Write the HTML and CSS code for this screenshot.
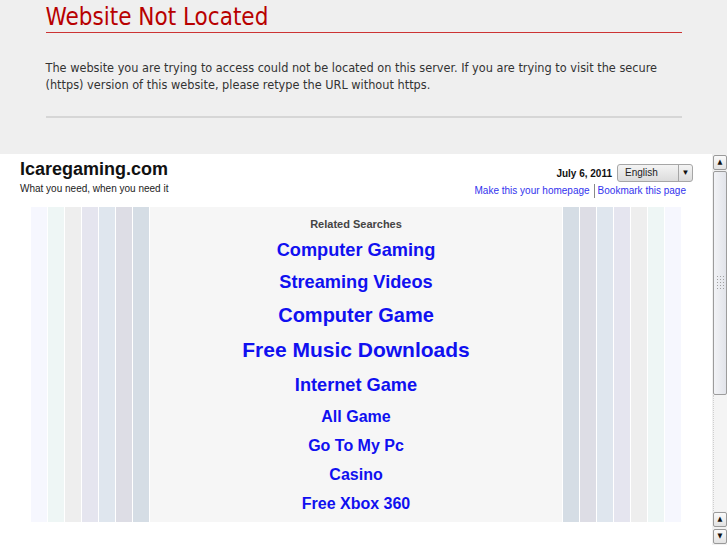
FILE: index.html
```html
<!DOCTYPE html>
<html lang="en">
<head>
    <meta charset="UTF-8">
    <title>Website Not Located</title>
    <link rel="stylesheet" href="styles.css">
</head>
<body>
    <div class="notice">
        <div class="notice-inner">
            <h1>Website Not Located</h1>
            <p>The website you are trying to access could not be located on this server. If you are trying to visit the secure (https) version of this website, please retype the URL without https.</p>
            <div class="rule"></div>
        </div>
    </div>

    <div class="frame">
        <div class="frame-page">
            <div class="top">
                <div class="brand">
                    <div class="brand-name">Icaregaming.com</div>
                    <div class="tagline">What you need, when you need it</div>
                </div>
                <div class="tools">
                    <div class="date-row">
                        <span class="date">July 6, 2011</span>
                        <div class="lang">
                            <span class="lang-label">English</span>
                            <span class="lang-arrow">&#9660;</span>
                        </div>
                    </div>
                    <div class="links">
                        <a href="#">Make this your homepage</a>
                        <a href="#" class="sep">Bookmark this page</a>
                    </div>
                </div>
            </div>

            <div class="results">
                <div class="stripes left">
                    <span class="c1"></span><span class="c2"></span><span class="c3"></span><span class="c4"></span><span class="c5"></span><span class="c6"></span><span class="c7"></span>
                </div>
                <div class="searches">
                    <div class="searches-title">Related Searches</div>
                    <a href="#" class="s18">Computer Gaming</a>
                    <a href="#" class="s18">Streaming Videos</a>
                    <a href="#" class="s20">Computer Game</a>
                    <a href="#" class="s21">Free Music Downloads</a>
                    <a href="#" class="s18 after-big">Internet Game</a>
                    <a href="#" class="s16 first">All Game</a>
                    <a href="#" class="s16">Go To My Pc</a>
                    <a href="#" class="s16">Casino</a>
                    <a href="#" class="s16">Free Xbox 360</a>
                </div>
                <div class="stripes right">
                    <span class="c7"></span><span class="c6"></span><span class="c5"></span><span class="c4"></span><span class="c3"></span><span class="c2"></span><span class="c1"></span>
                </div>
            </div>
        </div>

        <div class="scrollbar">
            <div class="sb-btn">&#9650;</div>
            <div class="sb-track">
                <div class="sb-thumb"><span class="grip"></span></div>
                <div class="sb-rest"></div>
            </div>
            <div class="sb-btn">&#9650;</div>
            <div class="sb-btn">&#9660;</div>
        </div>
    </div>
</body>
</html>
```

FILE: styles.css
```css
html, body { margin: 0; padding: 0; }
body { font-family: "DejaVu Sans Condensed", "DejaVu Sans", Verdana, sans-serif; font-stretch: condensed; background: #fff; overflow: hidden; }

.notice { background: #efefef; height: 154px; }
.notice-inner { width: 636px; margin: 0 auto; padding-top: 3px; }
.notice h1 {
    margin: 0;
    font-size: 24px;
    font-weight: normal;
    line-height: 28px;
    color: #b80000;
    padding-bottom: 1px;
    border-bottom: 1px solid #cc3333;
}
.notice p {
    margin: 26px 0 0;
    font-size: 12.6px;
    line-height: 17px;
    color: #333;
}
.rule { margin-top: 23px; border-top: 2px solid #d6d6d6; }

.frame { display: flex; height: 391px; }
.frame-page {
    flex: 1;
    background: #fff;
    font-family: "Liberation Sans", Arial, sans-serif;
    font-stretch: normal;
}

.top { display: flex; justify-content: space-between; padding: 5px 19px 0 20px; height: 48px; }
.brand-name { font-size: 18px; font-weight: bold; color: #111; line-height: 21px; }
.tagline { font-size: 10px; color: #222; line-height: 13px; margin-top: 2px; }

.tools { display: flex; flex-direction: column; align-items: flex-end; padding-top: 5px; }
.date-row { display: flex; align-items: center; }
.date { font-size: 10px; font-weight: bold; color: #111; margin-right: 5px; }
.lang {
    display: flex;
    width: 74px;
    height: 16px;
    border: 1px solid #a6a6a6;
    border-radius: 3px;
    background: linear-gradient(#f4f4f4, #dcdcdc);
    font-size: 10px;
    color: #222;
}
.lang-label { flex: 1; padding-left: 7px; line-height: 16px; }
.lang-arrow {
    width: 13px;
    border-left: 1px solid #a6a6a6;
    font-size: 8px;
    line-height: 16px;
    text-align: center;
    color: #111;
}
.links { display: flex; margin-top: 2px; margin-right: 7px; }
.links a { font-size: 10px; color: #3333ee; text-decoration: none; line-height: 14px; }
.links .sep { border-left: 1px solid #888; padding-left: 3px; margin-left: 4px; }

.results { display: flex; margin: 0 31px; height: 315px; }
.stripes { display: flex; width: 119px; }
.stripes span { width: 16px; }
.stripes.left span { margin-right: 1px; }
.stripes.right span { margin-left: 1px; }
.c1 { background: #f6f7fe; }
.c2 { background: #eef6f5; }
.c3 { background: #eeeeee; }
.c4 { background: #e5e5ef; }
.c5 { background: #dfe6ee; }
.c6 { background: #dddde5; }
.c7 { background: #d5dde5; }

.searches {
    flex: 1;
    background: #f6f6f6;
    display: flex;
    flex-direction: column;
    align-items: center;
    padding-top: 10px;
}
.searches-title { font-size: 11px; font-weight: bold; color: #444; line-height: 14px; margin-bottom: 3px; }
.searches a { font-weight: bold; color: #1010f0; text-decoration: none; }
.s16 { font-size: 16px; line-height: 29px; }
.s16.first { margin-top: 1px; }
.s18 { font-size: 18.2px; line-height: 32px; }
.s18.after-big { margin-top: 2px; }
.s20 { font-size: 20px; line-height: 35px; }
.s21 { font-size: 21px; line-height: 34px; }

.scrollbar { width: 15px; display: flex; flex-direction: column; background: #f1f1f1; }
.sb-btn {
    height: 13px;
    margin: 1px 0 1px 1px;
    border: 1px solid #9a9a9a;
    border-radius: 2px;
    background: linear-gradient(#fafafa, #e2e2e2);
    font-size: 7px;
    line-height: 13px;
    text-align: center;
    color: #111;
}
.sb-track { flex: 1; display: flex; flex-direction: column; }
.sb-thumb {
    height: 222px;
    margin-left: 1px;
    border: 1px solid #9c9c9c;
    border-radius: 2px;
    background: linear-gradient(90deg, #f2f3f6, #e2e4ea);
    display: flex;
    align-items: center;
    justify-content: center;
}
.grip {
    width: 8px;
    height: 16px;
    background: radial-gradient(circle, #a0a0a0 0.6px, transparent 1px) 0 0 / 3px 3px;
}
.sb-rest { flex: 1; margin-left: 1px; border-left: 1px dotted #cfcfcf; background: #f4f4f4; }
```
